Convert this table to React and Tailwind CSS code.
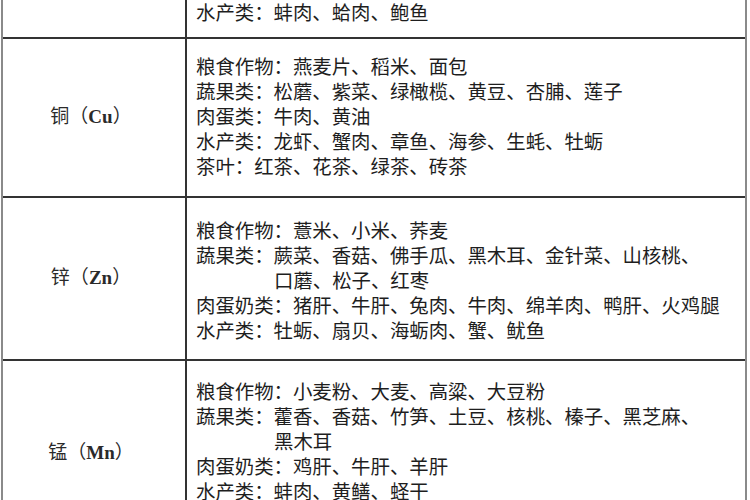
import React from "react";

const rows = [
  {
    label: "",
    h: "h-[39px]",
    pad: "pt-0",
    lines: [["水产类：蚌肉、蛤肉、鲍鱼"]],
    top: true,
  },
  {
    label: ["铜", "Cu"],
    h: "h-[159px]",
    pad: "pt-[16px]",
    lines: [
      ["粮食作物：燕麦片、稻米、面包"],
      ["蔬果类：松蘑、紫菜、绿橄榄、黄豆、杏脯、莲子"],
      ["肉蛋类：牛肉、黄油"],
      ["水产类：龙虾、蟹肉、章鱼、海参、生蚝、牡蛎"],
      ["茶叶：红茶、花茶、绿茶、砖茶"],
    ],
  },
  {
    label: ["锌", "Zn"],
    h: "h-[163px]",
    pad: "pt-[21px]",
    lines: [
      ["粮食作物：薏米、小米、荞麦"],
      ["蔬果类：蕨菜、香菇、佛手瓜、黑木耳、金针菜、山核桃、"],
      ["口蘑、松子、红枣", true],
      ["肉蛋奶类：猪肝、牛肝、兔肉、牛肉、绵羊肉、鸭肝、火鸡腿"],
      ["水产类：牡蛎、扇贝、海蛎肉、蟹、鱿鱼"],
    ],
  },
  {
    label: ["锰", "Mn"],
    h: "h-[186px]",
    pad: "pt-[19px]",
    lines: [
      ["粮食作物：小麦粉、大麦、高粱、大豆粉"],
      ["蔬果类：藿香、香菇、竹笋、土豆、核桃、榛子、黑芝麻、"],
      ["黑木耳", true],
      ["肉蛋奶类：鸡肝、牛肝、羊肝"],
      ["水产类：蚌肉、黄鳝、蛏干"],
    ],
  },
];

function Row({ row }) {
  return (
    <div className={`flex ${row.h} border-b-2 border-[#333] shrink-0`}>
      <div className="w-[184px] shrink-0 border-r-2 border-[#333] flex items-center justify-center text-[19px] text-[#2a2a2a] pr-[6px]">
        {row.label && (
          <span>
            {row.label[0]}（<span className="font-bold">{row.label[1]}</span>）
          </span>
        )}
      </div>
      <div
        className={`flex-1 pl-[9px] ${row.pad} ${
          row.top ? "flex flex-col justify-end pb-[11px]" : ""
        } text-[19.4px] leading-[25px] text-[#1e1e1e] whitespace-nowrap`}
      >
        {row.lines.map(([t, indent], i) => (
          <div key={i} className={indent ? "pl-[78px]" : ""}>
            {t}
          </div>
        ))}
      </div>
    </div>
  );
}

export default function App() {
  return (
    <div
      className="w-[750px] h-[500px] overflow-hidden bg-white"
      style={{ fontFamily: '"Liberation Serif", "Noto Sans CJK SC", serif' }}
    >
      <div className="ml-[1px] w-[746px] border-x-[2px] border-x-[#8a8a8a] flex flex-col">
        {rows.map((r, i) => (
          <Row key={i} row={r} />
        ))}
      </div>
    </div>
  );
}
